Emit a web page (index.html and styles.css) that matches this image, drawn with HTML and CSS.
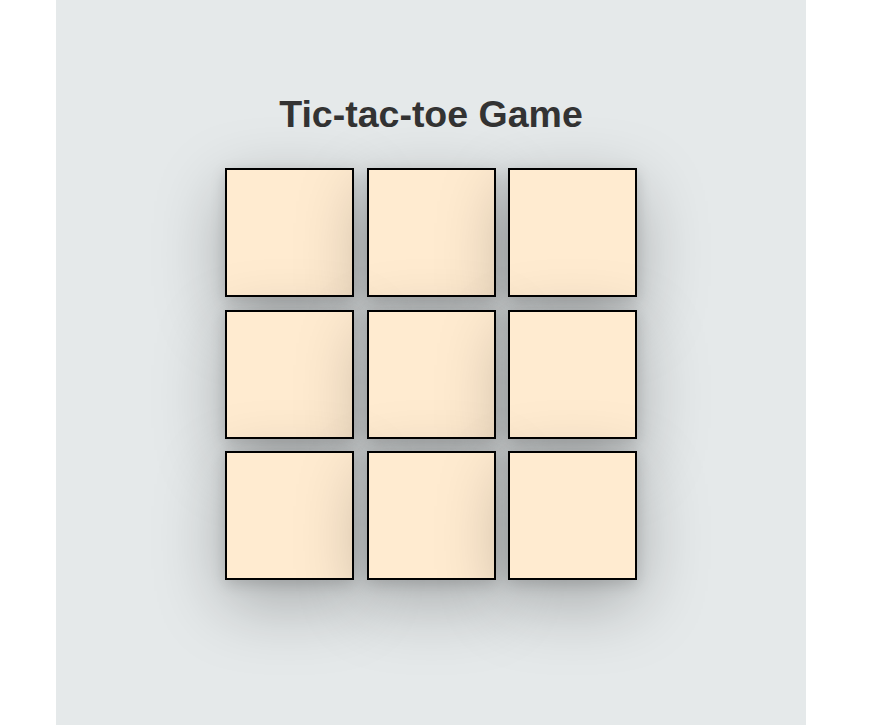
FILE: index.html
```html
<!DOCTYPE html>
<html>
<head>
<meta charset="utf-8">
<title>Tic-tac-toe Game</title>
<link rel="stylesheet" href="styles.css">
</head>
<body>
<div class="app">
  <h1 class="title">Tic-tac-toe Game</h1>
  <div class="board">
    <div class="cell"></div>
    <div class="cell"></div>
    <div class="cell"></div>
    <div class="cell"></div>
    <div class="cell"></div>
    <div class="cell"></div>
    <div class="cell"></div>
    <div class="cell"></div>
    <div class="cell"></div>
  </div>
</div>
</body>
</html>
```
FILE: styles.css
```css
html, body {
  margin: 0;
  padding: 0;
  height: 100%;
  background: #ffffff;
}
.app {
  width: 750px;
  min-height: 100%;
  margin-left: 56px;
  background: #e5e9ea;
  display: flex;
  flex-direction: column;
  align-items: center;
  font-family: "Liberation Sans", Arial, sans-serif;
  padding-top: 94px;
  box-sizing: border-box;
}
.title {
  margin: 0 0 34px 0;
  font-size: 37.5px;
  font-weight: bold;
  color: #333333;
  line-height: 40px;
}
.board {
  display: grid;
  grid-template-columns: repeat(3, 129px);
  grid-auto-rows: 129px;
  gap: 12.5px;
}
.cell {
  box-sizing: border-box;
  border: 2px solid #000;
  background: #ffebd0;
  box-shadow: 0 22px 70px rgba(0, 0, 0, 0.28), 0 4px 14px rgba(0, 0, 0, 0.15);
}
```
